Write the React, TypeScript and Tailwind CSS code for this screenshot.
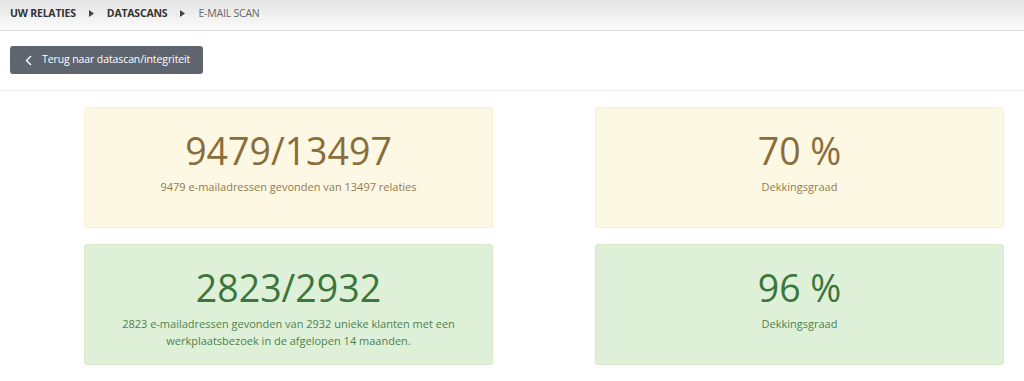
import React from 'react';

type Stat = {
  value: string;
  label: string;
  tone: 'warning' | 'success';
};

const stats: Stat[] = [
  { value: '9479/13497', label: '9479 e-mailadressen gevonden van 13497 relaties', tone: 'warning' },
  { value: '70 %', label: 'Dekkingsgraad', tone: 'warning' },
  {
    value: '2823/2932',
    label: '2823 e-mailadressen gevonden van 2932 unieke klanten met een werkplaatsbezoek in de afgelopen 14 maanden.',
    tone: 'success',
  },
  { value: '96 %', label: 'Dekkingsgraad', tone: 'success' },
];

const Caret = () => (
  <svg width="5" height="7" viewBox="0 0 5 7" className="mx-[13px]">
    <path d="M0 0 L5 3.5 L0 7 Z" fill="#444" />
  </svg>
);

const StatCard: React.FC<{ stat: Stat }> = ({ stat }) => {
  const tone =
    stat.tone === 'warning'
      ? 'bg-[#fcf8e3] border-[#f8efd0] text-[#8a6d3b]'
      : 'bg-[#dff0d8] border-[#d6e9c6] text-[#3c763d]';

  return (
    <div className={`h-[121px] rounded-[3px] border px-6 pt-[20px] text-center ${tone}`}>
      <div className="text-[37.5px] leading-[46px] font-normal">{stat.value}</div>
      <p className="mx-auto mt-[4px] max-w-[360px] text-[11px] leading-[17px] opacity-90">{stat.label}</p>
    </div>
  );
};

export default function App() {
  return (
    <div className="min-h-[381px] bg-white text-[#333]" style={{ fontFamily: '"Open Sans", "Liberation Sans", sans-serif' }}>
      <div className="flex h-[31px] items-center border-b border-[#dcdcdc] bg-gradient-to-b from-[#e4e4e4] to-[#fbfbfb] pb-[3px] pl-[10px] text-[10.5px] tracking-[-0.2px]">
        <span className="font-bold text-[#333]">UW RELATIES</span>
        <Caret />
        <span className="font-bold text-[#333]">DATASCANS</span>
        <Caret />
        <span className="text-[#666]">E-MAIL SCAN</span>
      </div>

      <div className="border-b border-[#efefef] px-[10px] pt-[15px] pb-[16px]">
        <button className="flex h-[28px] w-[193px] items-center rounded-[3px] bg-[#5e656f] pl-[15px] text-[10.5px] tracking-[-0.1px] text-white">
          <svg width="7" height="11" viewBox="0 0 7 11" className="mr-[10px]">
            <path d="M6 1 L1.5 5.5 L6 10" fill="none" stroke="#fff" strokeWidth="1.4" />
          </svg>
          Terug naar datascan/integriteit
        </button>
      </div>

      <div className="grid grid-cols-[409px_409px] gap-x-[102px] gap-y-[16px] pt-[16px] pl-[84px]">
        {stats.map((stat) => (
          <StatCard key={stat.value} stat={stat} />
        ))}
      </div>
    </div>
  );
}
